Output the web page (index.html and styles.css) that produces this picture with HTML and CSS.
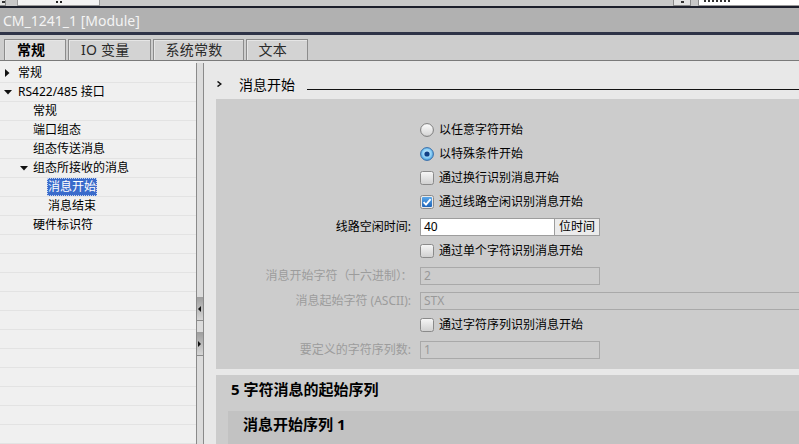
FILE: index.html
```html
<!DOCTYPE html>
<html lang="zh-CN">
<head>
<meta charset="utf-8">
<title>CM_1241_1 [Module]</title>
<link rel="stylesheet" href="styles.css">
</head>
<body>
<div class="app">
  <div class="topstrip">
    <div class="ts-a"><span class="ts-mark"></span></div>
    <div class="ts-b"><span class="ts-dots"></span></div>
    <div class="ts-spacer"></div>
    <div class="ts-c"><span class="ts-mark"></span></div>
    <div class="ts-d"><span class="ts-text"></span></div>
  </div>
  <div class="darkline-top"></div>
  <div class="titlebar">CM_1241_1 [Module]</div>
  <div class="darkline-bottom"></div>
  <div class="tabbar">
    <div class="tab active">常规</div>
    <div class="tab">IO 变量</div>
    <div class="tab">系统常数</div>
    <div class="tab">文本</div>
  </div>
  <div class="workspace">
    <div class="tree">
      <div class="tree-row lv1"><span class="twisty"><svg width="5" height="8" viewBox="0 0 5 8"><path d="M0 0L4.5 4L0 8Z" fill="#111"/></svg></span>常规</div>
      <div class="tree-row lv1"><span class="twisty"><svg width="8" height="5" viewBox="0 0 8 5"><path d="M0 0L8 0L4 4.5Z" fill="#111"/></svg></span>RS422/485 接口</div>
      <div class="tree-row lv2">常规</div>
      <div class="tree-row lv2">端口组态</div>
      <div class="tree-row lv2">组态传送消息</div>
      <div class="tree-row lv2t"><span class="twisty"><svg width="8" height="5" viewBox="0 0 8 5"><path d="M0 0L8 0L4 4.5Z" fill="#111"/></svg></span>组态所接收的消息</div>
      <div class="tree-row lv3"><span class="sel">消息开始</span></div>
      <div class="tree-row lv3"><span class="item">消息结束</span></div>
      <div class="tree-row lv2">硬件标识符</div>
      <div class="tree-row"></div>
      <div class="tree-row"></div>
      <div class="tree-row"></div>
      <div class="tree-row"></div>
      <div class="tree-row"></div>
      <div class="tree-row"></div>
      <div class="tree-row"></div>
      <div class="tree-row"></div>
      <div class="tree-row"></div>
      <div class="tree-row"></div>
      <div class="tree-row"></div>
      <div class="tree-row"></div>
    </div>
    <div class="splitter">
      <div class="split-btn"><svg width="3" height="6" viewBox="0 0 3 6"><path d="M3 0L0 3L3 6Z" fill="#111"/></svg></div>
      <div class="split-btn"><svg width="3" height="6" viewBox="0 0 3 6"><path d="M0 0L3 3L0 6Z" fill="#111"/></svg></div>
    </div>
    <div class="main">
      <div class="section-head">
        <svg class="chev" width="5" height="6" viewBox="0 0 5 6"><path d="M0.5 0.5L3.8 3L0.5 5.5" fill="none" stroke="#111" stroke-width="1.5"/></svg>
        <span class="section-title">消息开始</span>
        <span class="section-line"></span>
      </div>
      <div class="panel">
        <div class="form">
          <div class="opt ctl"><svg class="box" width="14" height="14" viewBox="0 0 14 14"><defs><linearGradient id="gr" x1="0" y1="0" x2="0" y2="1"><stop offset="0" stop-color="#fdfdfd"/><stop offset="1" stop-color="#d2d2d2"/></linearGradient></defs><circle cx="7" cy="7" r="6.4" fill="url(#gr)" stroke="#7c7c7c" stroke-width="1"/></svg><span>以任意字符开始</span></div>
          <div class="opt ctl"><svg class="box" width="14" height="14" viewBox="0 0 14 14"><defs><radialGradient id="rb" cx="0.5" cy="0.45" r="0.6"><stop offset="0" stop-color="#e4f6ff"/><stop offset="0.55" stop-color="#8fd0f6"/><stop offset="1" stop-color="#2f8fd8"/></radialGradient></defs><circle cx="7" cy="7" r="6.4" fill="url(#rb)" stroke="#3a6ea8" stroke-width="1"/><circle cx="7" cy="7" r="2.6" fill="#0f3f86"/></svg><span>以特殊条件开始</span></div>
          <div class="opt ctl"><svg class="box" width="14" height="14" viewBox="0 0 14 14"><defs><linearGradient id="cb" x1="0" y1="0" x2="0" y2="1"><stop offset="0" stop-color="#f7f7f7"/><stop offset="1" stop-color="#cfcfcf"/></linearGradient></defs><rect x="0.5" y="0.5" width="13" height="13" rx="2" fill="url(#cb)" stroke="#8a8a8a"/></svg><span>通过换行识别消息开始</span></div>
          <div class="opt ctl"><svg class="box" width="14" height="14" viewBox="0 0 14 14"><defs><linearGradient id="cbb" x1="0" y1="0" x2="0" y2="1"><stop offset="0" stop-color="#5aa8ea"/><stop offset="1" stop-color="#1f64b8"/></linearGradient></defs><rect x="0.5" y="0.5" width="13" height="13" rx="2" fill="#e9e9e9" stroke="#8a8a8a"/><rect x="2" y="2" width="10" height="10" rx="1" fill="url(#cbb)"/><path d="M3.6 7.2L6 9.6L10.6 4.2" fill="none" stroke="#fff" stroke-width="1.8"/></svg><span>通过线路空闲识别消息开始</span></div>
          <div class="flabel">线路空闲时间:</div>
          <div class="field"><span class="val">40</span><span class="unit">位时间</span></div>
          <div class="opt ctl"><svg class="box" width="14" height="14" viewBox="0 0 14 14"><rect x="0.5" y="0.5" width="13" height="13" rx="2" fill="url(#cb)" stroke="#8a8a8a"/></svg><span>通过单个字符识别消息开始</span></div>
          <div class="flabel dis">消息开始字符<span class="punct">（</span>十六进制<span class="punct">）：</span></div>
          <div class="field dis"><span class="val">2</span></div>
          <div class="flabel dis">消息起始字符 (ASCII):</div>
          <div class="field dis wide"><span class="val">STX</span></div>
          <div class="opt ctl"><svg class="box" width="14" height="14" viewBox="0 0 14 14"><rect x="0.5" y="0.5" width="13" height="13" rx="2" fill="url(#cb)" stroke="#8a8a8a"/></svg><span>通过字符序列识别消息开始</span></div>
          <div class="flabel dis">要定义的字符序列数:</div>
          <div class="field dis"><span class="val">1</span></div>
        </div>
      </div>
      <div class="panel2">
        <div class="panel2-title">5 字符消息的起始序列</div>
        <div class="subpanel">
          <div class="subpanel-title">消息开始序列 1</div>
        </div>
      </div>
    </div>
  </div>
</div>
</body>
</html>
```
FILE: styles.css
```css
* { box-sizing: border-box; margin: 0; padding: 0; }
html, body { width: 799px; height: 444px; overflow: hidden; }
body {
  font-family: "Noto Sans", "Noto Sans CJK SC", sans-serif;
  font-size: 12px;
  color: #000;
  background: #e8e8e8;
}
.app { display: flex; flex-direction: column; height: 444px; }

/* top strip */
.topstrip { height: 6px; background: #c8c8c8; display: flex; flex-shrink: 0; }
.ts-a { width: 6px; background: #e4e4e4; border-right: 1px solid #8a8a8a; border-bottom: 1px solid #8a8a8a; position: relative; }
.ts-b { width: 83px; margin-left: 11px; background: #f3f3f3; border: 1px solid #9a9a9a; border-top: none; display: flex; justify-content: center; }
.ts-dots { width: 6px; height: 2px; margin-top: 1px; border-bottom: 2px dotted #222; }
.ts-spacer { flex: 1; }
.ts-c { width: 18px; background: #e2e2e2; border: 1px solid #8a8a8a; border-top: none; display: flex; justify-content: center; }
.ts-mark { display: block; width: 3px; height: 2px; background: #333; margin-top: 1px; }
.ts-a .ts-mark { position: absolute; left: 2px; top: 1px; margin: 0; }
.ts-d { width: 101px; margin-left: 7px; background: #fff; border-left: 1px solid #8a8a8a; border-bottom: 1px solid #9a9a9a; }
.ts-text { display: block; width: 26px; height: 2px; margin: 0 0 0 5px; border-bottom: 2px dotted #333; }

.darkline-top { height: 2px; background: #1c1f2b; flex-shrink: 0; }
.titlebar {
  height: 24px; background: #b1b1b1; color: #f4f4f4;
  font-family: "Noto Sans", sans-serif; font-size: 14px; line-height: 25px;
  padding-left: 3px; flex-shrink: 0;
}
.darkline-bottom { height: 3px; background: #2e3347; flex-shrink: 0; }

/* tabs */
.tabbar {
  height: 26px; background: #cdcdcd; border-bottom: 1px solid #7a7a7a;
  display: flex; align-items: flex-end; gap: 2px; padding-left: 4px; flex-shrink: 0;
}
.tab {
  height: 21px; padding: 0 20px 0 12px; min-width: 62px;
  border: 1px solid #8c8c8c; border-bottom: none;
  background: #d3d3d3; box-shadow: inset 1px 1px 0 #e6e6e6;
  font-family: "Noto Sans", "Noto Sans CJK SC", sans-serif;
  font-size: 14px; line-height: 20px; color: #2a2a2a; white-space: nowrap;
  letter-spacing: 0.25px;
}
.tab.active { background: #dedede; font-weight: bold; color: #000; letter-spacing: 0; }

/* workspace */
.workspace { flex: 1; display: flex; min-height: 0; }
.tree { width: 196px; background: #f0f0f0; padding-top: 3px; overflow: hidden; flex-shrink: 0; }
.tree-row {
  height: 19px; border-bottom: 1px solid #e3e3e3;
  display: flex; align-items: center; line-height: 18px; white-space: nowrap;
}
.twisty { width: 13px; display: flex; align-items: center; }
.lv1 { padding-left: 5px; }
.lv1 .twisty svg[width="8"] { margin-left: -1px; }
.lv2 { padding-left: 33px; }
.lv2t { padding-left: 20px; }
.lv3 { padding-left: 47px; }
.sel { background: #3a6bcb; color: #fff; border: 1px dotted #c7d5f2; height: 18px; line-height: 16px; }
.item { border: 1px solid transparent; line-height: 16px; }

.splitter {
  width: 8px; margin-top: 2px; background: #dcdcdc;
  border-left: 1px solid #8a8a8a; border-right: 1px solid #8a8a8a;
  display: flex; flex-direction: column; gap: 11px; padding-top: 234px; flex-shrink: 0;
}
.split-btn {
  height: 24px; background: linear-gradient(#9e9e9e, #d6d6d6);
  border-bottom: 1px solid #8a8a8a; display: flex; align-items: center;
}
.split-btn svg { margin-left: 1px; }

.main { flex: 1; padding-left: 12px; background: #e8e8e8; display: flex; flex-direction: column; min-width: 0; }
.section-head { height: 38px; display: flex; align-items: flex-end; flex-shrink: 0; }
.chev { margin: 0 0 12px 1px; }
.section-title { font-family: "Noto Sans CJK SC", sans-serif; font-size: 14px; line-height: 20px; margin: 0 0 5px 17px; }
.section-line { flex: 1; height: 1px; background: #111; margin: 0 0 9px 12px; }

.panel { height: 270px; background: #cccccc; padding-top: 19px; margin-bottom: 6px; flex-shrink: 0; }
.form {
  display: grid; grid-template-columns: 195px 1fr; column-gap: 9px;
  grid-template-rows: 24px 24px 24px 24px 25px 24px 25px 25px 24px 25px;
  align-items: center;
}
.ctl { grid-column: 2; }
.opt { display: flex; align-items: center; gap: 5px; line-height: 16px; white-space: nowrap; }
.opt .box { flex-shrink: 0; }
.flabel { grid-column: 1; text-align: right; white-space: nowrap; line-height: 16px; }
.flabel.dis { color: #9c9c9c; }
.punct { letter-spacing: -1.5px; }
.field {
  grid-column: 2; width: 180px; height: 18px; border: 1px solid #9d9d9d;
  background: #fff; display: flex; align-items: center; line-height: 16px;
}
.field .val { flex: 1; padding-left: 3px; }
.field .unit { width: 45px; height: 16px; background: #ebebeb; border-left: 1px solid #9d9d9d; text-align: center; }
.field.dis { background: #cccccc; border-color: #a9a9a9; color: #999; }
.field.wide { width: 400px; }

.panel2 { flex: 1; background: #cccccc; padding-left: 12px; display: flex; flex-direction: column; }
.panel2-title {
  height: 28px; margin-bottom: 8px; padding-left: 3px;
  font-size: 15px; font-weight: bold; line-height: 28px;
}
.subpanel { flex: 1; background: #c2c2c2; padding-left: 15px; }
.subpanel-title { font-size: 15px; font-weight: bold; line-height: 26px; }
```
